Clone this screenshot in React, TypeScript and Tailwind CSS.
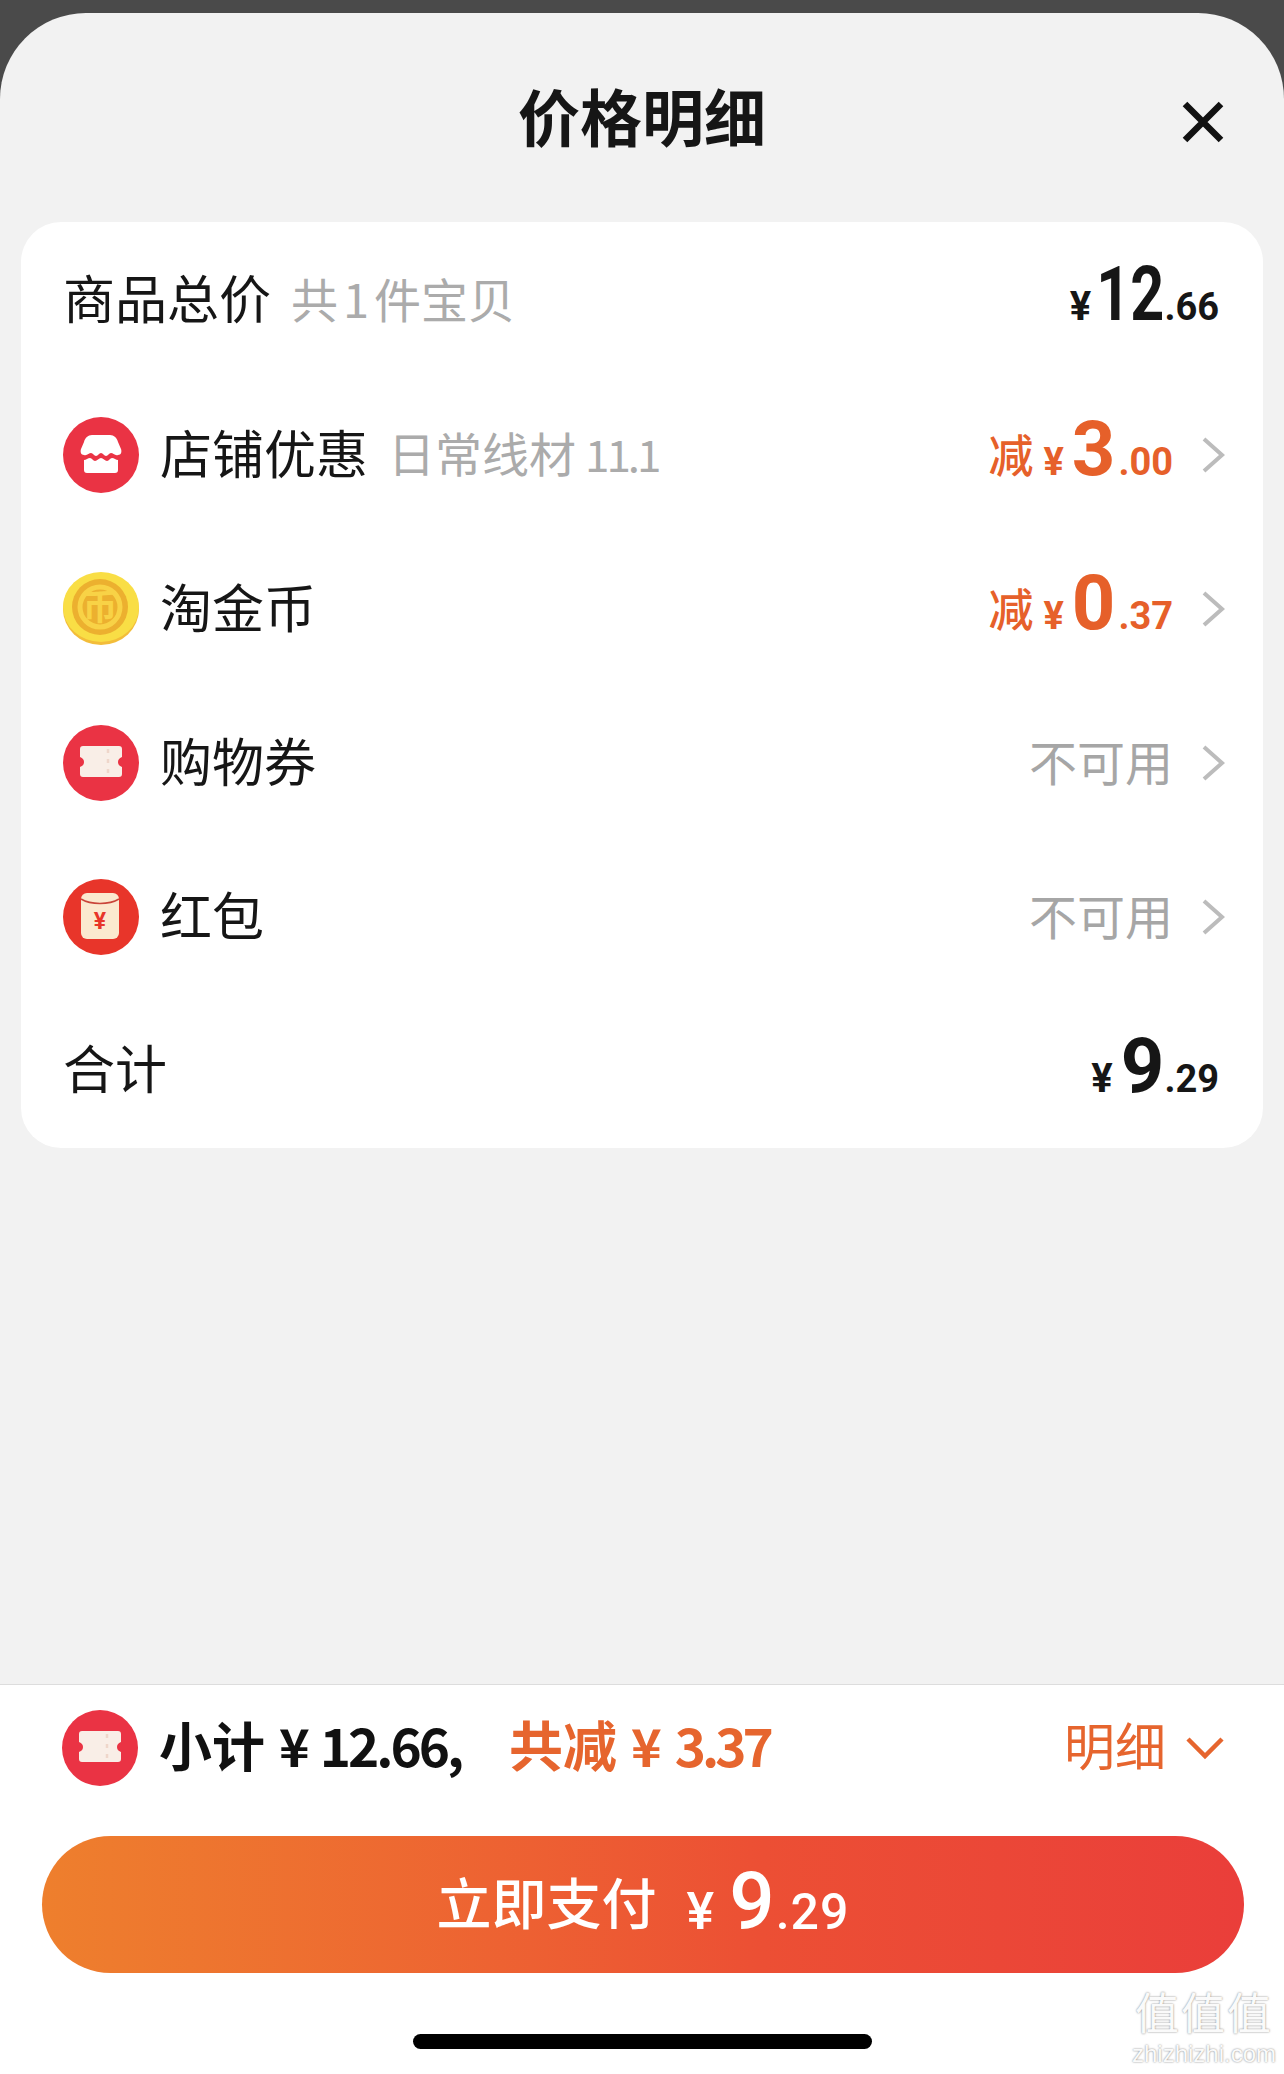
const CJK = 'font-["Noto_Sans_CJK_SC","Noto_Sans",sans-serif]'

function StoreIcon() {
  return (
    <svg viewBox="0 0 76 76" className="h-[76px] w-[76px] shrink-0">
      <circle cx="38" cy="38" r="38" fill="#ea3344" />
      <path d="M29 18h18c4 0 7 3 8 7l3 7c1 3 0 6-3 6-3 1-5-2-7-2s-3 3-5 3-3-3-5-3-3 3-5 3-3-3-5-3-4 3-7 2c-3 0-4-3-3-6l3-7c1-4 4-7 8-7z" fill="#fff" />
      <path d="M21 43c2 0 4-2 6-2s3 3 5 3 4-3 6-3 4 3 6 3 3-3 5-3 4 2 6 2v10c0 2-1 3-3 3H24c-2 0-3-1-3-3z" fill="#fff" />
    </svg>
  )
}

function CoinIcon() {
  return (
    <svg viewBox="0 0 76 76" className="h-[76px] w-[76px] shrink-0">
      <ellipse cx="38" cy="38" rx="38" ry="36" fill="#f3bd3a" />
      <ellipse cx="38" cy="36" rx="38" ry="35" fill="#f9de45" />
      <circle cx="37" cy="36" r="28" fill="#ecb02f" />
      <circle cx="37" cy="36" r="20" fill="none" stroke="#f8d246" strokeWidth="5" />
      <text x="37" y="49" textAnchor="middle" fontSize="35" fontWeight="700" fill="#f8d246" fontFamily="Noto Sans CJK SC">币</text>
    </svg>
  )
}

function TicketIcon() {
  return (
    <svg viewBox="0 0 76 76" className="h-[76px] w-[76px] shrink-0">
      <circle cx="38" cy="38" r="38" fill="#ea3344" />
      <path d="M20 21h36c2 0 3 1 3 3v8c-3 1-4 3-4 5s1 4 4 5v7c0 2-1 3-3 3H20c-2 0-3-1-3-3v-7c3-1 4-3 4-5s-1-4-4-5v-8c0-2 1-3 3-3z" fill="#f9eee7" />
      <path d="M45 24v27" stroke="#efd6ca" strokeWidth="2.500" strokeDasharray="4 6" />
    </svg>
  )
}

function HongbaoIcon() {
  return (
    <svg viewBox="0 0 76 76" className="h-[76px] w-[76px] shrink-0">
      <circle cx="38" cy="38" r="38" fill="#e8352a" />
      <rect x="18" y="14" width="38" height="46" rx="6" fill="#fbe9cf" />
      <path d="M18 20c10 6 28 6 38 0" fill="none" stroke="#c9453a" strokeWidth="1.500" />
      <text x="37" y="50" textAnchor="middle" fontSize="23" fontWeight="700" fill="#e8352a" fontFamily="Roboto">¥</text>
    </svg>
  )
}

function Chevron() {
  return (
    <svg viewBox="0 0 24 38" className="ml-[28px] h-[38px] w-[24px] shrink-0" fill="none" stroke="#bcbcbc" strokeWidth="4">
      <path d="M3 3l18 16L3 35" />
    </svg>
  )
}

function Price({
  int,
  dec,
  big = 'text-[76px]',
  small = 'text-[38px]',
  yen = 'text-[40px] mr-[10px]',
  weight = 'font-bold',
}: {
  int: string
  dec: string
  big?: string
  small?: string
  yen?: string
  weight?: string
}) {
  return (
    <span className={`flex items-baseline font-['Roboto',sans-serif] ${weight}`}>
      <span className={`${yen} leading-none`}>¥</span>
      <span className={`${big} leading-none`}>{int}</span>
      <span className={`${small} leading-none`}>{dec}</span>
    </span>
  )
}

function Row({
  icon,
  label,
  note,
  children,
  chevron,
}: {
  icon?: React.ReactNode
  label: string
  note?: React.ReactNode
  children?: React.ReactNode
  chevron?: boolean
}) {
  return (
    <div className="flex h-[154px] items-center">
      {icon}
      <span className={`text-[52px] leading-none text-[#161616] ${icon ? 'ml-[21px] pb-[6px]' : 'pb-[8px]'}`}>{label}</span>
      {note && <span className="ml-[20px] flex items-baseline pb-[8px] text-[47px] leading-none text-[#ababab]">{note}</span>}
      <div className="ml-auto flex items-center">
        {children}
        {chevron && <Chevron />}
      </div>
    </div>
  )
}

function Discount({ int, dec }: { int: string; dec: string }) {
  return (
    <span className="flex items-center text-[#e6602a]">
      <span className="mr-[10px] pb-[4px] text-[45px] font-medium leading-none">减</span>
      <span className="pb-[13px]">
        <Price int={int} dec={dec} small="ml-[3px] text-[38px]" yen="text-[38px] mr-[8px]" />
      </span>
    </span>
  )
}

function Unavailable() {
  return <span className="pb-[6px] text-[48px] leading-none text-[#a6a6a6]">不可用</span>
}

export default function App() {
  return (
    <div className={`flex h-[2074px] w-full flex-col overflow-hidden bg-[#4a4a4a] pt-[13px] ${CJK}`}>
      <div className="flex flex-1 flex-col overflow-hidden rounded-t-[86px] bg-[#f2f2f2]">
        <header className="grid h-[209px] shrink-0 grid-cols-[1fr_auto_1fr] items-center pb-[5px] pr-[60px]">
          <div />
          <h1 className="pl-[60px] text-[62px] font-semibold leading-none text-[#161616]">价格明细</h1>
          <div className="flex justify-end pt-[14px]">
            <svg viewBox="0 0 42 42" className="h-[42px] w-[42px]" stroke="#111" strokeWidth="6.500">
              <path d="M3 3l36 36M39 3L3 39" />
            </svg>
          </div>
        </header>

        <section className="mx-[21px] rounded-[40px] bg-white pl-[42px] pr-[38px] pt-[2px]">
          <Row
            label="商品总价"
            note={
              <>
                共<span className="mx-[5px]">1</span>件宝贝
              </>
            }
          >
            <span className="pb-[15px] pr-[6px] text-[#161616]">
              <Price int="12" dec=".66" big="origin-right scale-x-[0.78] text-[76px]" yen="text-[40px] -mr-[14px]" />
            </span>
          </Row>
          <Row
            icon={<StoreIcon />}
            label="店铺优惠"
            note={
              <>
                日常线材<span className="ml-[9px] text-[44px] tracking-[-3px]">11.1</span>
              </>
            }
            chevron
          >
            <Discount int="3" dec=".00" />
          </Row>
          <Row icon={<CoinIcon />} label="淘金币" chevron>
            <Discount int="0" dec=".37" />
          </Row>
          <Row icon={<TicketIcon />} label="购物券" chevron>
            <Unavailable />
          </Row>
          <Row icon={<HongbaoIcon />} label="红包" chevron>
            <Unavailable />
          </Row>
          <Row label="合计">
            <span className="pb-[10px] pr-[6px] text-[#161616]">
              <Price int="9" dec=".29" yen="text-[40px] mr-[8px]" />
            </span>
          </Row>
        </section>
      </div>

      <footer className="relative h-[390px] shrink-0 border-t border-[#dddddd] bg-white">
        <div className="flex h-[126px] items-center pl-[62px] pr-[60px]">
          <TicketIcon />
          <span className="ml-[21px] flex w-[350px] shrink-0 items-baseline pb-[8px] text-[53px] font-semibold leading-none text-[#111]">
            小计
            <span className="ml-[14px] text-[52px]">¥</span>
            <span className="ml-[10px] text-[53px] tracking-[-3px]">12.66,</span>
          </span>
          <span className="flex items-baseline pb-[8px] text-[54px] font-semibold leading-none text-[#e6652e]">
            共减
            <span className="ml-[14px] text-[52px]">¥</span>
            <span className="ml-[13px] text-[53px] tracking-[-4px]">3.37</span>
          </span>
          <span className="ml-auto pb-[8px] text-[51px] leading-none text-[#e6652e]">明细</span>
          <svg viewBox="0 0 38 24" className="ml-[20px] h-[24px] w-[38px]" fill="none" stroke="#e6652e" strokeWidth="4.500">
            <path d="M2 3l17 17L36 3" />
          </svg>
        </div>
        <button className="mx-auto mt-[25px] flex h-[137px] w-[1202px] translate-x-px items-center justify-center rounded-full bg-gradient-to-r from-[#ee7f2d] via-[#ec4f34] via-60% to-[#ea3e3a] text-white">
          <span className="pb-[8px] text-[55px] font-medium leading-none">立即支付</span>
          <span className="ml-[30px] pb-[5px]">
            <Price
              int="9"
              dec=".29"
              big="text-[80px] mr-[1px]"
              small="text-[50px] tracking-[1px]"
              yen="text-[52px] mr-[15px]"
              weight="font-medium"
            />
          </span>
        </button>
        <div className="mx-auto mt-[61px] h-[15px] w-[459px] rounded-full bg-black" />
        <div className="absolute bottom-[6px] right-[8px] flex flex-col items-center text-[#fafafa] [text-shadow:0_0_2px_#777777]">
          <span className="font-['Liberation_Sans','Noto_Sans_CJK_SC',sans-serif] text-[44px] leading-[50px] tracking-[2px]">值值值</span>
          <span className="font-['Liberation_Sans',sans-serif] text-[24px] leading-[28px]">zhizhizhi.com</span>
        </div>
      </footer>
    </div>
  )
}
